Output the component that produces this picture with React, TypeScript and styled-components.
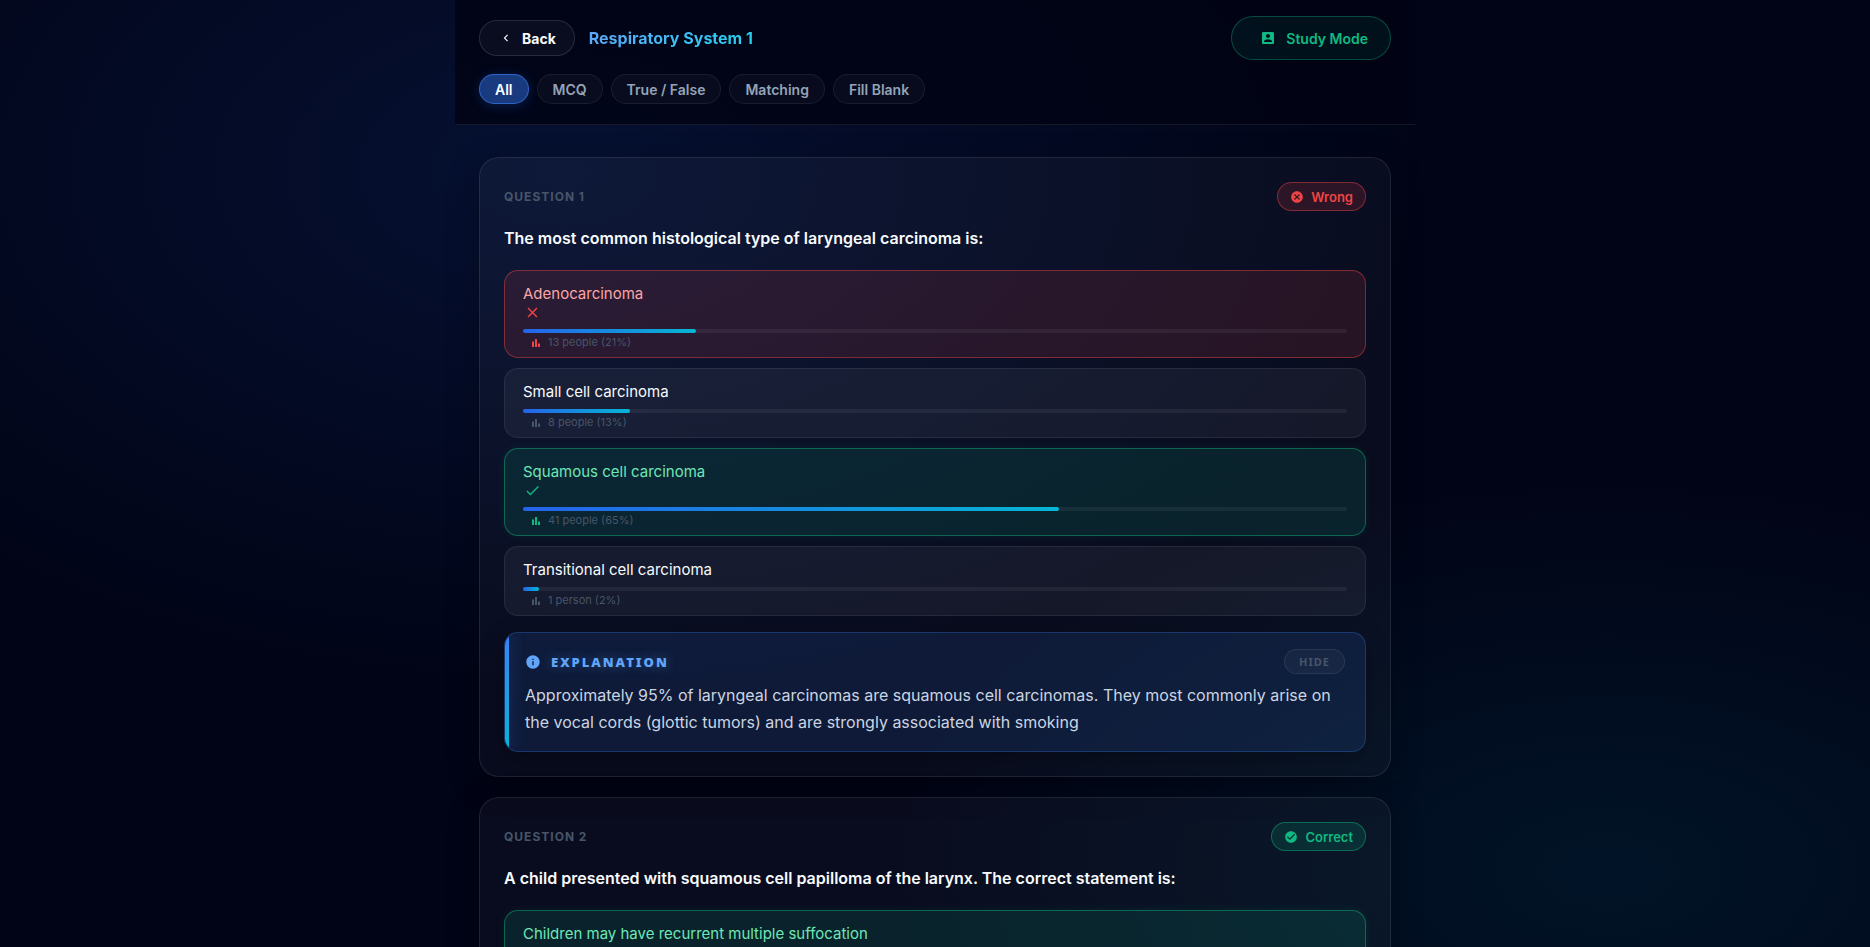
import React from 'react';
import styled, { createGlobalStyle, css } from 'styled-components';

const GlobalStyle = createGlobalStyle`
  * { box-sizing: border-box; }
  body {
    margin: 0;
    min-height: 100vh;
    color: #f8fafc;
    font-family: Inter, "Open Sans", sans-serif;
    background:
      radial-gradient(ellipse at 30% 18%, rgba(37, 99, 235, 0.13) 0%, transparent 48%) fixed,
      radial-gradient(ellipse at 86% 92%, rgba(6, 182, 212, 0.09) 0%, transparent 32%) fixed,
      #010416;
  }
  button { font-family: inherit; cursor: pointer; }
`;

type Tone = 'plain' | 'wrong' | 'correct';

const Page = styled.div`
  height: 100vh;
  overflow: hidden;
`;

const Container = styled.div`
  max-width: 960px;
  margin: 0 auto;
`;

const Header = styled.header`
  padding: 16px 24px 20px;
  background: rgba(1, 3, 20, 0.85);
  border-bottom: 1px solid rgba(255, 255, 255, 0.08);
`;

const HeaderRow = styled.div`
  display: flex;
  align-items: center;
  justify-content: space-between;
  height: 44px;
  margin-bottom: 14px;
`;

const HeaderStart = styled.div`
  display: flex;
  align-items: center;
  gap: 14px;
`;

const BackButton = styled.button`
  display: flex;
  align-items: center;
  gap: 9px;
  height: 36px;
  padding: 0 18px 0 19px;
  border: 1px solid rgba(255, 255, 255, 0.12);
  border-radius: 18px;
  background: rgba(255, 255, 255, 0.04);
  color: #f8fafc;
  font-size: 14px;
  font-weight: 700;
`;

const Title = styled.h1`
  margin: 0;
  font-size: 16px;
  font-weight: 700;
  line-height: 24px;
  background: linear-gradient(135deg, #60a5fa, #22d3ee);
  background-clip: text;
  color: transparent;
`;

const StudyButton = styled.button`
  display: flex;
  align-items: center;
  gap: 10px;
  height: 44px;
  padding: 0 22px 0 28px;
  border: 1px solid rgba(16, 185, 129, 0.35);
  border-radius: 22px;
  background: rgba(16, 185, 129, 0.08);
  color: #10b981;
  font-size: 14px;
  font-weight: 600;
`;

const Filters = styled.nav`
  display: flex;
  gap: 8px;
`;

const FilterButton = styled.button<{ $active?: boolean }>`
  height: 30px;
  padding: 0 15px;
  border: 1px solid ${p => (p.$active ? 'rgba(59, 130, 246, 0.6)' : 'rgba(255, 255, 255, 0.07)')};
  border-radius: 15px;
  background: ${p => (p.$active ? '#1a3a80' : 'rgba(255, 255, 255, 0.03)')};
  box-shadow: ${p => (p.$active ? '0 2px 12px rgba(37, 99, 235, 0.25)' : 'none')};
  color: ${p => (p.$active ? '#ffffff' : '#94a3b8')};
  font-size: 14px;
  font-weight: 600;
`;

const Questions = styled.main`
  display: flex;
  flex-direction: column;
  gap: 20px;
  padding: 32px 24px;
`;

const Card = styled.article`
  padding: 24px;
  border: 1px solid rgba(255, 255, 255, 0.09);
  border-radius: 20px;
  background: rgba(255, 255, 255, 0.035);
  box-shadow: 0 8px 32px rgba(0, 0, 0, 0.25);
`;

const CardHead = styled.div`
  display: flex;
  align-items: center;
  justify-content: space-between;
  margin-bottom: 15px;
`;

const QuestionNumber = styled.span`
  color: #475569;
  font-size: 12px;
  font-weight: 700;
  letter-spacing: 1px;
  text-transform: uppercase;
`;

const Badge = styled.span<{ $tone: Tone }>`
  display: flex;
  align-items: center;
  gap: 7px;
  height: 29px;
  padding: 0 12px;
  border: 1px solid ${p => (p.$tone === 'wrong' ? 'rgba(239, 68, 68, 0.45)' : 'rgba(16, 185, 129, 0.45)')};
  border-radius: 15px;
  background: ${p => (p.$tone === 'wrong' ? 'rgba(239, 68, 68, 0.15)' : 'rgba(16, 185, 129, 0.15)')};
  color: ${p => (p.$tone === 'wrong' ? '#ef4444' : '#10b981')};
  font-size: 13px;
  font-weight: 600;
`;

const QuestionText = styled.h2`
  margin: 0 0 20px;
  font-size: 16px;
  font-weight: 600;
  line-height: 24px;
`;

const Options = styled.div`
  display: flex;
  flex-direction: column;
  gap: 10px;
`;

const tones = {
  plain: css`
    border-color: rgba(255, 255, 255, 0.08);
    background: rgba(255, 255, 255, 0.05);
    color: #f8fafc;
    --mark: #475569;
  `,
  wrong: css`
    border-color: rgba(239, 68, 68, 0.45);
    background: rgba(239, 68, 68, 0.13);
    color: #fca5a5;
    --mark: #ef4444;
  `,
  correct: css`
    border-color: rgba(16, 185, 129, 0.45);
    background: rgba(16, 185, 129, 0.13);
    box-shadow: 0 0 10px rgba(16, 185, 129, 0.1);
    color: #6ee7b7;
    --mark: #10b981;
  `,
};

const OptionButton = styled.button<{ $tone: Tone }>`
  display: block;
  width: 100%;
  padding: 13px 18px 5px;
  border: 1px solid;
  border-radius: 14px;
  font-size: 15px;
  line-height: 20px;
  text-align: left;
  ${p => tones[p.$tone]}
`;

const Mark = styled.span`
  display: block;
  height: 18px;
  padding-left: 1px;
  color: var(--mark);
  line-height: 0;
`;

const Track = styled.span`
  display: block;
  height: 4px;
  margin-top: 7px;
  border-radius: 2px;
  background: rgba(255, 255, 255, 0.06);
`;

const Fill = styled.span`
  display: block;
  height: 4px;
  border-radius: 2px;
  background: linear-gradient(90deg, #2563eb, #06b6d4);
`;

const Count = styled.span`
  display: flex;
  align-items: center;
  gap: 6px;
  height: 19px;
  padding-left: 7px;
  color: #475569;
  font-size: 11px;
  line-height: 19px;
  svg { color: var(--mark); }
`;

const Explanation = styled.section`
  position: relative;
  margin-top: 16px;
  padding: 16px 20px 15px;
  overflow: hidden;
  border: 1px solid rgba(59, 130, 246, 0.28);
  border-radius: 14px;
  background: rgba(59, 130, 246, 0.12);
  box-shadow: 0 8px 24px rgba(0, 0, 0, 0.3);
  &::before {
    content: "";
    position: absolute;
    top: 0;
    bottom: 0;
    left: 0;
    width: 4px;
    background: linear-gradient(#3b82f6, #06b6d4);
    box-shadow: 0 0 16px rgba(59, 130, 246, 0.4);
  }
`;

const ExplanationHead = styled.div`
  display: flex;
  align-items: center;
  justify-content: space-between;
  height: 25px;
  margin-bottom: 8px;
`;

const ExplanationTitle = styled.h3`
  display: flex;
  align-items: center;
  gap: 10px;
  margin: 0;
  color: #60a5fa;
  font-family: "Noto Sans", sans-serif;
  font-size: 13px;
  font-weight: 900;
  letter-spacing: 2px;
  text-shadow: 0 0 12px rgba(96, 165, 250, 0.4);
`;

const HideButton = styled.button`
  height: 25px;
  padding: 0 14px;
  border: 1px solid rgba(255, 255, 255, 0.08);
  border-radius: 13px;
  background: rgba(255, 255, 255, 0.04);
  color: #475569;
  && { font-family: "Noto Sans", sans-serif; }
  font-size: 11px;
  font-weight: 700;
  letter-spacing: 1px;
`;

const ExplanationText = styled.p`
  margin: 0;
  color: #cbd5e1;
  font-size: 16px;
  line-height: 27px;
`;

const Icon = ({ d, size }: { d: string; size: number }) => (
  <svg width={size} height={size} viewBox="0 0 24 24" fill="currentColor" aria-hidden="true">
    <path d={d} />
  </svg>
);

const paths = {
  back: 'M15.41 7.41 14 6l-6 6 6 6 1.41-1.41L10.83 12z',
  study: 'M3 5v14c0 1.1.89 2 2 2h14c1.1 0 2-.9 2-2V5c0-1.1-.9-2-2-2H5c-1.11 0-2 .9-2 2zm12 4c0 1.66-1.34 3-3 3s-3-1.34-3-3 1.34-3 3-3 3 1.34 3 3zm-9 8c0-2 4-3.1 6-3.1s6 1.1 6 3.1v1H6v-1z',
  wrong: 'M12 2C6.47 2 2 6.47 2 12s4.47 10 10 10 10-4.47 10-10S17.53 2 12 2zm5 13.59L15.59 17 12 13.41 8.41 17 7 15.59 10.59 12 7 8.41 8.41 7 12 10.59 15.59 7 17 8.41 13.41 12 17 15.59z',
  correct: 'M12 2C6.48 2 2 6.48 2 12s4.48 10 10 10 10-4.48 10-10S17.52 2 12 2zm-2 15-5-5 1.41-1.41L10 14.17l7.59-7.59L19 8l-9 9z',
  close: 'M19 6.41 17.59 5 12 10.59 6.41 5 5 6.41 10.59 12 5 17.59 6.41 19 12 13.41 17.59 19 19 17.59 13.41 12z',
  check: 'M9 16.17 4.83 12l-1.42 1.41L9 19 21 7l-1.41-1.41z',
  bars: 'M4 9h4v11H4zm12 4h4v7h-4zm-6-9h4v16h-4z',
  info: 'M12 2C6.48 2 2 6.48 2 12s4.48 10 10 10 10-4.48 10-10S17.52 2 12 2zm1 15h-2v-6h2v6zm0-8h-2V7h2v2z',
};

interface Answer {
  text: string;
  tone?: Tone;
  people?: string;
  percent?: number;
}

const Option = ({ text, tone = 'plain', people, percent }: Answer) => (
  <OptionButton type="button" $tone={tone}>
    {text}
    {tone !== 'plain' && (
      <Mark>
        <Icon d={tone === 'wrong' ? paths.close : paths.check} size={17} />
      </Mark>
    )}
    {people && (
      <>
        <Track>
          <Fill style={{ width: `${percent}%` }} />
        </Track>
        <Count>
          <Icon d={paths.bars} size={12} />
          {people} ({percent}%)
        </Count>
      </>
    )}
  </OptionButton>
);

const answers: Answer[] = [
  { text: 'Adenocarcinoma', tone: 'wrong', people: '13 people', percent: 21 },
  { text: 'Small cell carcinoma', people: '8 people', percent: 13 },
  { text: 'Squamous cell carcinoma', tone: 'correct', people: '41 people', percent: 65 },
  { text: 'Transitional cell carcinoma', people: '1 person', percent: 2 },
];

const filters = ['All', 'MCQ', 'True / False', 'Matching', 'Fill Blank'];

export default function App() {
  return (
    <>
      <GlobalStyle />
      <Page>
        <Container>
          <Header>
            <HeaderRow>
              <HeaderStart>
                <BackButton type="button">
                  <Icon d={paths.back} size={14} />
                  Back
                </BackButton>
                <Title>Respiratory System 1</Title>
              </HeaderStart>
              <StudyButton type="button">
                <Icon d={paths.study} size={16} />
                Study Mode
              </StudyButton>
            </HeaderRow>
            <Filters>
              {filters.map(name => (
                <FilterButton key={name} type="button" $active={name === 'All'}>
                  {name}
                </FilterButton>
              ))}
            </Filters>
          </Header>
          <Questions>
            <Card>
              <CardHead>
                <QuestionNumber>Question 1</QuestionNumber>
                <Badge $tone="wrong">
                  <Icon d={paths.wrong} size={14} />
                  Wrong
                </Badge>
              </CardHead>
              <QuestionText>The most common histological type of laryngeal carcinoma is:</QuestionText>
              <Options>
                {answers.map(a => (
                  <Option key={a.text} {...a} />
                ))}
              </Options>
              <Explanation>
                <ExplanationHead>
                  <ExplanationTitle>
                    <Icon d={paths.info} size={16} />
                    EXPLANATION
                  </ExplanationTitle>
                  <HideButton type="button">HIDE</HideButton>
                </ExplanationHead>
                <ExplanationText>
                  Approximately 95% of laryngeal carcinomas are squamous cell carcinomas. They most commonly arise on
                  the vocal cords (glottic tumors) and are strongly associated with smoking
                </ExplanationText>
              </Explanation>
            </Card>
            <Card>
              <CardHead>
                <QuestionNumber>Question 2</QuestionNumber>
                <Badge $tone="correct">
                  <Icon d={paths.correct} size={14} />
                  Correct
                </Badge>
              </CardHead>
              <QuestionText>
                A child presented with squamous cell papilloma of the larynx. The correct statement is:
              </QuestionText>
              <Options>
                <Option text="Children may have recurrent multiple suffocation" tone="correct" />
              </Options>
            </Card>
          </Questions>
        </Container>
      </Page>
    </>
  );
}
